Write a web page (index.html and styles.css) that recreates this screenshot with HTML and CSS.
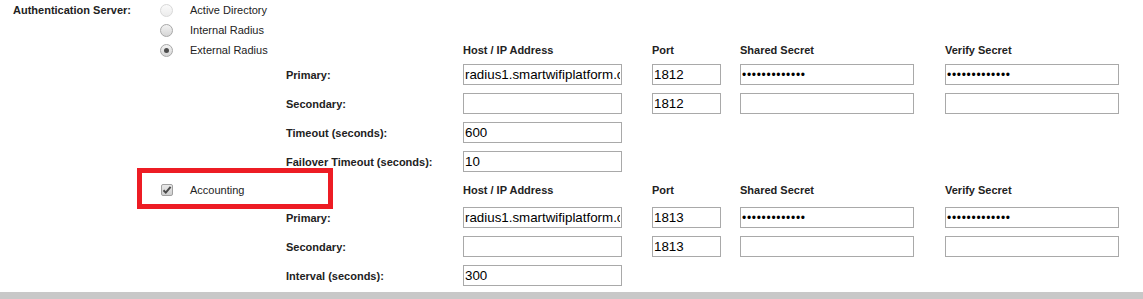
FILE: index.html
```html
<!DOCTYPE html>
<html lang="en">
<head>
    <meta charset="UTF-8">
    <title>Authentication Server</title>
    <link rel="stylesheet" href="styles.css">
</head>
<body>

    <div class="auth-form">
        <div class="row radio-row">
            <div class="field-label">Authentication Server:</div>
            <span class="radio disabled"></span>
            <div class="option">Active Directory</div>
        </div>
        <div class="row radio-row">
            <div></div>
            <span class="radio"></span>
            <div class="option">Internal Radius</div>
        </div>
        <div class="row radio-row">
            <div></div>
            <span class="radio checked"></span>
            <div class="option">External Radius</div>
            <div></div>
            <div class="col-head">Host / IP Address</div>
            <div class="col-head">Port</div>
            <div class="col-head">Shared Secret</div>
            <div class="col-head">Verify Secret</div>
        </div>

        <div class="row">
            <div></div><div></div><div></div>
            <div class="sub-label">Primary:</div>
            <input type="text" class="host" value="radius1.smartwifiplatform.com">
            <input type="text" class="port" value="1812">
            <input type="password" class="secret" value="abcdefghijklm">
            <input type="password" class="secret" value="abcdefghijklm">
        </div>
        <div class="row">
            <div></div><div></div><div></div>
            <div class="sub-label">Secondary:</div>
            <input type="text" class="host" value="">
            <input type="text" class="port" value="1812">
            <input type="password" class="secret" value="">
            <input type="password" class="secret" value="">
        </div>
        <div class="row">
            <div></div><div></div><div></div>
            <div class="sub-label">Timeout (seconds):</div>
            <input type="text" class="host" value="600">
        </div>
        <div class="row">
            <div></div><div></div><div></div>
            <div class="sub-label">Failover Timeout (seconds):</div>
            <input type="text" class="host" value="10">
        </div>

        <div class="row accounting-row">
            <div></div>
            <span class="checkbox checked">
                <svg width="10" height="10" viewBox="0 0 10 10"><path d="M1.5 5.2 L3.8 7.6 L8.6 1.8" fill="none" stroke="#4a4a4a" stroke-width="2"/></svg>
            </span>
            <div class="option">Accounting</div>
            <div></div>
            <div class="col-head">Host / IP Address</div>
            <div class="col-head">Port</div>
            <div class="col-head">Shared Secret</div>
            <div class="col-head">Verify Secret</div>
            <div class="highlight"></div>
        </div>

        <div class="row">
            <div></div><div></div><div></div>
            <div class="sub-label">Primary:</div>
            <input type="text" class="host" value="radius1.smartwifiplatform.com">
            <input type="text" class="port" value="1813">
            <input type="password" class="secret" value="abcdefghijklm">
            <input type="password" class="secret" value="abcdefghijklm">
        </div>
        <div class="row">
            <div></div><div></div><div></div>
            <div class="sub-label">Secondary:</div>
            <input type="text" class="host" value="">
            <input type="text" class="port" value="1813">
            <input type="password" class="secret" value="">
            <input type="password" class="secret" value="">
        </div>
        <div class="row">
            <div></div><div></div><div></div>
            <div class="sub-label">Interval (seconds):</div>
            <input type="text" class="host" value="300">
        </div>
    </div>

    <div class="footer-bar"></div>

</body>
</html>
```

FILE: styles.css
```css
html, body { margin: 0; padding: 0; background: #fff; }
body { font-family: "Liberation Sans", Arial, sans-serif; font-size: 11px; color: #222; }

.auth-form { padding-left: 13px; }

.row {
    display: grid;
    grid-template-columns: 147px 30px 96px 177px 189px 88px 205px 1fr;
    align-items: center;
    height: 29px;
}
.radio-row { height: 20px; }
.accounting-row { height: 27px; position: relative; }

.field-label, .sub-label, .col-head { font-weight: bold; white-space: nowrap; }
.option { white-space: nowrap; }

/* radio buttons */
.radio {
    width: 13px;
    height: 13px;
    box-sizing: border-box;
    border-radius: 50%;
    border: 1px solid #a8a8a8;
    background: linear-gradient(#f2f2f2, #d6d6d6);
    position: relative;
}
.radio.disabled { border-color: #d8d8d8; background: linear-gradient(#fafafa, #ececec); }
.radio.checked::after {
    content: "";
    position: absolute;
    left: 3px; top: 3px;
    width: 5px; height: 5px;
    border-radius: 50%;
    background: #4d4d4d;
}

.checkbox {
    width: 12px;
    height: 12px;
    box-sizing: border-box;
    margin-left: 1px;
    border: 1px solid #a0a0a0;
    border-radius: 2px;
    background: linear-gradient(#e8e8e8, #cfcfcf);
    display: flex;
    align-items: center;
    justify-content: center;
}

/* inputs */
input {
    box-sizing: border-box;
    height: 21px;
    margin: 0;
    padding: 0 1px 0 1px;
    border: 1px solid #a9a9a9;
    border-radius: 0;
    font-family: "Liberation Sans", Arial, sans-serif;
    font-size: 13.33px;
    color: #000;
    background: #fff;
    outline: none;
}
input.host { width: 159px; }
input.port { width: 69px; }
input.secret { width: 174px; }
input[type=password] { font-size: 12px; letter-spacing: 0.7px; }

/* screenshot annotation */
.highlight {
    position: absolute;
    left: 124px;
    top: -8px;
    width: 196px;
    height: 41px;
    box-sizing: border-box;
    border: 5px solid #ed1c24;
}

.footer-bar { margin-top: 2px; height: 8px; background: #c8c8c8; }
```
